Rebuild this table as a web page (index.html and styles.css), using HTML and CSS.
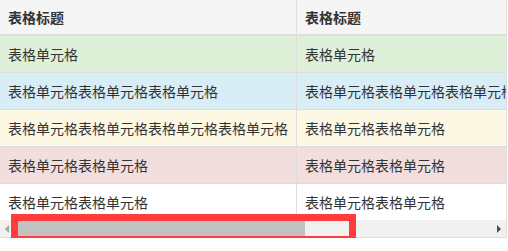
FILE: index.html
```html
<!DOCTYPE html>
<html>
<head>
    <meta charset="UTF-8">
    <meta name="viewport" content="width=device-width, initial-scale=1.0">
    <title>响应式表格</title>
    <link rel="stylesheet" href="styles.css">
</head>
<body>
    <div class="table-responsive">
        <div class="table-scroll">
            <table class="table">
                <thead>
                    <tr>
                        <th>表格标题</th>
                        <th>表格标题</th>
                    </tr>
                </thead>
                <tbody>
                    <tr class="success">
                        <td>表格单元格</td>
                        <td>表格单元格</td>
                    </tr>
                    <tr class="info">
                        <td>表格单元格表格单元格表格单元格</td>
                        <td>表格单元格表格单元格表格单元格</td>
                    </tr>
                    <tr class="warning">
                        <td>表格单元格表格单元格表格单元格表格单元格</td>
                        <td>表格单元格表格单元格</td>
                    </tr>
                    <tr class="danger">
                        <td>表格单元格表格单元格</td>
                        <td>表格单元格表格单元格</td>
                    </tr>
                    <tr>
                        <td>表格单元格表格单元格</td>
                        <td>表格单元格表格单元格</td>
                    </tr>
                </tbody>
            </table>
        </div>

        <!-- горизонтальная полоса прокрутки -->
        <div class="scrollbar">
            <span class="arrow arrow-left"></span>
            <div class="track">
                <div class="thumb"></div>
            </div>
            <span class="arrow arrow-right"></span>
        </div>

        <div class="highlight"></div>
    </div>
</body>
</html>
```

FILE: styles.css
```css
body {
    margin: 0;
    background: #fff;
    font-family: "Noto Sans CJK SC", "Noto Sans", sans-serif;
    font-size: 14px;
    color: #333;
}

.table-responsive {
    position: relative;
    width: 508px;
    margin-left: -1px;
    border-right: 1px solid #ddd;
    border-bottom: 1px solid #ddd;
    box-sizing: border-box;
}

.table-scroll {
    overflow: hidden;
}

.table {
    border-collapse: collapse;
    white-space: nowrap;
}

.table th,
.table td {
    border: 1px solid #ddd;
    line-height: 20px;
    text-align: left;
    vertical-align: middle;
}

.table th {
    padding: 7px 8px;
    font-weight: bold;
    background: #f5f5f5;
    border-top: 0;
    border-bottom: 2px solid #ddd;
}

.table td {
    padding: 8px;
}

.table tbody tr:last-child td {
    border-bottom: 0;
}

.success td { background: #dff0d8; }
.info td { background: #d9edf7; }
.warning td { background: #fcf8e3; }
.danger td { background: #f2dede; }

/* Полоса прокрутки */
.scrollbar {
    display: flex;
    align-items: center;
    height: 17px;
    background: #f1f1f1;
}

.track {
    flex: 1;
    height: 100%;
    display: flex;
    align-items: center;
}

.thumb {
    width: 289px;
    height: 15px;
    background: #c1c1c1;
}

.arrow {
    width: 17px;
    height: 17px;
    display: flex;
    align-items: center;
    justify-content: center;
}

.arrow::before {
    content: "";
    border-top: 4px solid transparent;
    border-bottom: 4px solid transparent;
}

.arrow-left::before {
    border-right: 4px solid #a3a3a3;
    margin-left: -2px;
}

.arrow-right::before {
    border-left: 4px solid #505050;
    margin-left: 3px;
}

.highlight {
    position: absolute;
    left: 12px;
    top: 214px;
    width: 345px;
    height: 29px;
    border: 7px solid #ff3b3b;
    box-sizing: border-box;
}
```
